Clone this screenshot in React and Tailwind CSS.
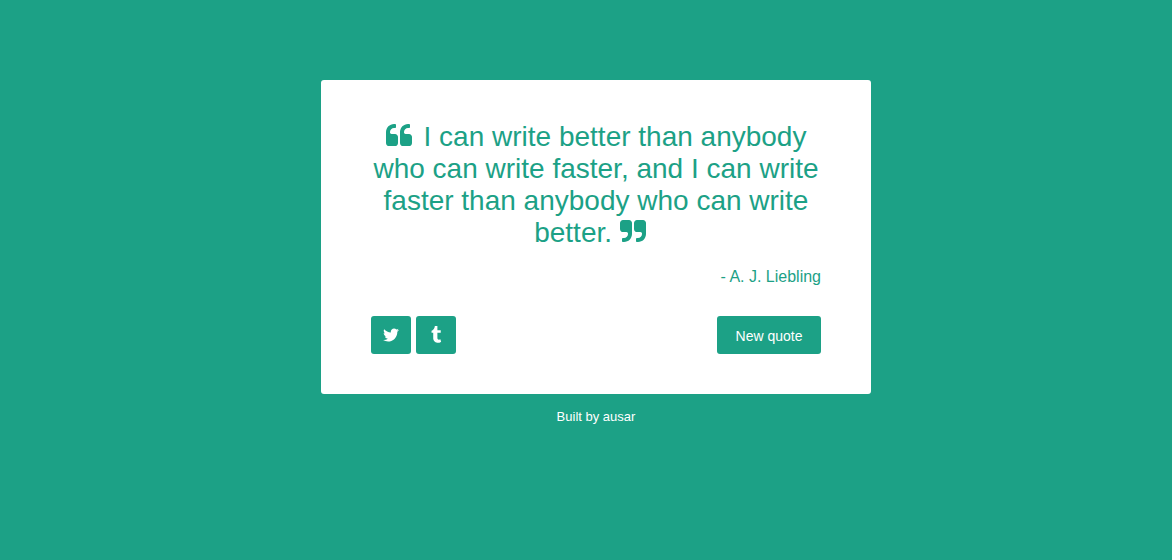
const QUOTE_LEFT =
  "M768 960v384q0 80-56 136t-136 56h-384q-80 0-136-56t-56-136v-704q0-104 40.5-198.5t109.5-163.5 163.5-109.5 198.5-40.5h64q26 0 45 19t19 45v128q0 26-19 45t-45 19h-64q-106 0-181 75t-75 181v32q0 40 28 68t68 28h224q80 0 136 56t56 136zm896 0v384q0 80-56 136t-136 56h-384q-80 0-136-56t-56-136v-704q0-104 40.5-198.5t109.5-163.5 163.5-109.5 198.5-40.5h64q26 0 45 19t19 45v128q0 26-19 45t-45 19h-64q-106 0-181 75t-75 181v32q0 40 28 68t68 28h224q80 0 136 56t56 136z";
const QUOTE_RIGHT =
  "M768 320v704q0 104-40.5 198.5t-109.5 163.5-163.5 109.5-198.5 40.5h-64q-26 0-45-19t-19-45v-128q0-26 19-45t45-19h64q106 0 181-75t75-181v-32q0-40-28-68t-68-28h-224q-80 0-136-56t-56-136v-384q0-80 56-136t136-56h384q80 0 136 56t56 136zm896 0v704q0 104-40.5 198.5t-109.5 163.5-163.5 109.5-198.5 40.5h-64q-26 0-45-19t-19-45v-128q0-26 19-45t45-19h64q106 0 181-75t75-181v-32q0-40-28-68t-68-28h-224q-80 0-136-56t-56-136v-384q0-80 56-136t136-56h384q80 0 136 56t56 136z";
const TWITTER =
  "M1684 408q-67 98-162 167 1 14 1 42 0 130-38 259.5t-115.5 248.5-184.5 210.5-258 146-323 54.5q-271 0-496-145 35 4 78 4 225 0 401-138-105-2-188-64.5t-114-159.5q33 5 61 5 43 0 85-11-112-23-185.5-111.5t-73.5-205.5v-4q68 38 146 41-66-44-105-115t-39-154q0-88 44-163 121 149 294.5 238.5t371.5 99.5q-8-38-8-74 0-134 94.5-228.5t228.5-94.5q140 0 236 102 109-21 205-78-37 115-142 178 93-10 186-50z";
const TUMBLR =
  "M1328 1329l80 237q-23 35-111 66t-177 32q-104 2-190.5-26t-142.5-74-95-106-55.5-120-16.5-118v-544h-168v-215q72-26 129-69.5t91-90 58-102 34-99 15-88.5q1-5 4.5-8.5t7.5-3.5h244v424h333v252h-334v518q0 30 6.5 56t22.5 52.5 49.5 41.5 81.5 14q78-2 134-29z";

const shareLinks = [
  { label: "Share on Twitter", href: "#twitter", path: TWITTER },
  { label: "Share on Tumblr", href: "#tumblr", path: TUMBLR },
];

function QuoteMark({ path }) {
  return (
    <svg
      viewBox="0 128 1664 1408"
      fill="currentColor"
      aria-hidden="true"
      className="mr-3 inline-block h-[22px] w-[26px] align-baseline"
    >
      <path d={path} />
    </svg>
  );
}

export default function App() {
  return (
    <div className="flex min-h-screen flex-col items-center bg-[#1ca186] px-4 pt-20 pl-9 font-['Liberation_Sans',Arial,sans-serif] text-[#1ca186]">
      <main className="w-full max-w-[550px] rounded-[3px] bg-white px-[50px] pt-[41px] pb-10">
        <blockquote className="text-center text-[28px] leading-8">
          <QuoteMark path={QUOTE_LEFT} />
          I can write better than anybody who can write faster, and I can write faster than anybody who can write better.{" "}
          <QuoteMark path={QUOTE_RIGHT} />
        </blockquote>
        <p className="mt-5 text-right text-base leading-4">- A. J. Liebling</p>
        <div className="mt-[31px] flex items-center justify-between">
          <div className="flex gap-[5px]">
            {shareLinks.map(({ label, href, path }) => (
              <a
                key={label}
                href={href}
                aria-label={label}
                className="flex h-[38px] w-10 items-center justify-center rounded-[3px] bg-[#1ca186] text-white"
              >
                <svg viewBox="0 0 1792 1792" fill="currentColor" aria-hidden="true" className="size-[18px]">
                  <path d={path} />
                </svg>
              </a>
            ))}
          </div>
          <button type="button" className="h-[38px] min-w-[104px] rounded-[3px] bg-[#1ca186] px-[18px] pt-[2px] text-sm text-white">
            New quote
          </button>
        </div>
      </main>
      <footer className="mt-[15px] text-[13px] leading-4 text-white">
        Built by <a href="#ausar">ausar</a>
      </footer>
    </div>
  );
}
